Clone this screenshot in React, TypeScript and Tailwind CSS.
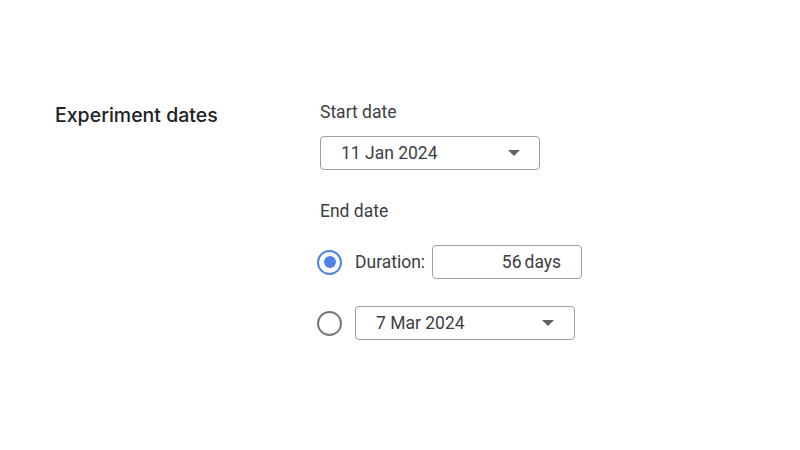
import React, { useState } from 'react';

const Caret: React.FC = () => (
  <svg width="12" height="6" viewBox="0 0 12 6" className="fill-[#5f6368]">
    <path d="M0 0h12L6 6z" />
  </svg>
);

const Radio: React.FC<{ checked: boolean; onClick: () => void }> = ({ checked, onClick }) => (
  <button
    type="button"
    onClick={onClick}
    className={`flex h-[25px] w-[25px] items-center justify-center rounded-full border-[2.5px] ${
      checked ? 'border-[#4f83e3]' : 'border-[#74777b]'
    }`}
  >
    {checked && <span className="h-[12px] w-[12px] rounded-full bg-[#4f83e3]" />}
  </button>
);

export default function App() {
  const [mode, setMode] = useState<'duration' | 'date'>('duration');

  return (
    <div
      className="flex h-[450px] w-[800px] bg-white pl-[55px] pt-[101px] text-[#3c4043]"
      style={{ fontFamily: 'Roboto, "Liberation Sans", sans-serif' }}
    >
      <div className="w-[265px]">
        <h2
          className="text-[19.5px] font-medium leading-[28px] text-[#202124]"
          style={{ fontFamily: 'Inter, Roboto, sans-serif' }}
        >
          Experiment dates
        </h2>
      </div>

      <div className="-mt-[1px] flex flex-col">
        <div className="text-[17.5px] leading-[24px]">Start date</div>
        <div className="mt-[12px] flex h-[34px] w-[220px] items-center justify-between rounded-[4px] border border-[#9aa0a6] pl-[20px] pr-[19px]">
          <span className="text-[17.5px] text-[#3c4043]">11 Jan 2024</span>
          <Caret />
        </div>

        <div className="mt-[29px] text-[17.5px] leading-[24px]">End date</div>

        <div className="mt-[22px] flex items-center">
          <div className="-ml-[3px] w-[38px]">
            <Radio checked={mode === 'duration'} onClick={() => setMode('duration')} />
          </div>
          <span className="text-[17.5px]">Duration:</span>
          <div className="ml-[7px] flex h-[34px] w-[150px] items-center justify-end rounded-[4px] border border-[#9aa0a6] pr-[20px] text-[17.5px]">
            <span>56</span>
            <span className="ml-[3px]">days</span>
          </div>
        </div>

        <div className="mt-[27px] flex items-center">
          <div className="-ml-[3px] w-[38px]">
            <Radio checked={mode === 'date'} onClick={() => setMode('date')} />
          </div>
          <div className="flex h-[34px] w-[220px] items-center justify-between rounded-[4px] border border-[#9aa0a6] pl-[20px] pr-[20px]">
            <span className="text-[17.5px]">7 Mar 2024</span>
            <Caret />
          </div>
        </div>
      </div>
    </div>
  );
}
